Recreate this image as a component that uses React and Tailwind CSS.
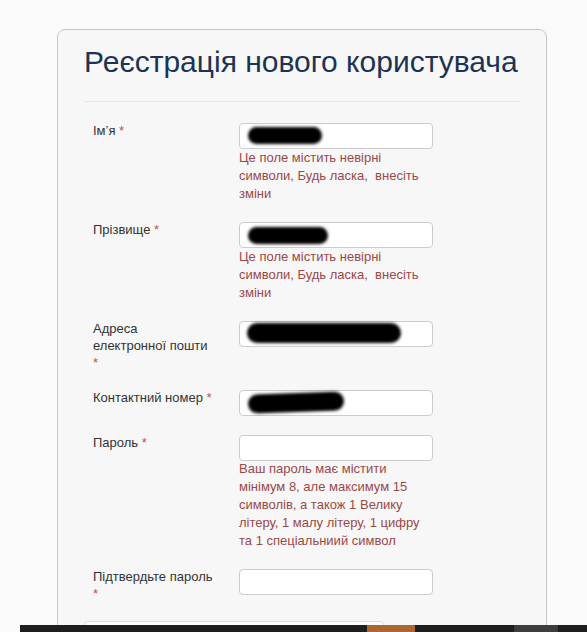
import React from "react";

const font = { fontFamily: '"Liberation Sans", Arial, sans-serif' };

function Star() {
  return <span className="text-[#c0504d]"> *</span>;
}

function Blob({ className }) {
  return (
    <div className={"pointer-events-none absolute rounded-full bg-black blur-[1.5px] " + className} />
  );
}

function Field({ children }) {
  return (
    <div className="relative h-[26px] w-[194px] rounded-[4px] border border-[#cccccc] bg-white">
      {children}
    </div>
  );
}

function Row({ label, children, className = "" }) {
  return (
    <div className={"flex " + className}>
      <div className="-mt-[1px] w-[146px] pr-3 text-[13px] leading-[17px] text-[#333333]">{label}</div>
      <div className="flex flex-col">{children}</div>
    </div>
  );
}

function Err({ children }) {
  return <div className="w-[194px] text-[13px] leading-[18px] text-[#9a4848]">{children}</div>;
}

export default function App() {
  return (
    <div className="relative h-[632px] w-[587px] overflow-hidden bg-[#fafafa]" style={font}>
      <div className="ml-[57px] mt-[29px] w-[490px] rounded-[8px] border border-[#c8c8c8] bg-[#f7f7f7] px-[26px] pb-10">
        <h1 className="pt-[12px] text-[30px] leading-[40px] text-[#1c3353]">Реєстрація нового користувача</h1>
        <div className="mt-[19px] h-px bg-[#e8e8e8]" />
        <div className="ml-[9px] mt-[21px] flex flex-col gap-[19px]">
          <Row label={<>Ім’я<Star /></>}>
            <Field>
              <Blob className="left-[8px] top-[3px] h-[17px] w-[74px]" />
            </Field>
            <Err>
              Це поле містить невірні символи, Будь ласка,&nbsp; внесіть зміни
            </Err>
          </Row>
          <Row label={<>Прізвище<Star /></>}>
            <Field>
              <Blob className="left-[8px] top-[4px] h-[17px] w-[80px]" />
            </Field>
            <Err>
              Це поле містить невірні символи, Будь ласка,&nbsp; внесіть зміни
            </Err>
          </Row>
          <Row label={<>Адреса<br />електронної пошти<br /><span className="text-[#c0504d]">*</span></>}>
            <Field>
              <Blob className="left-[7px] top-[1px] h-[20px] w-[154px]" />
            </Field>
          </Row>
          <Row label={<>Контактний номер<Star /></>}>
            <Field>
              <Blob className="left-[8px] top-[2px] h-[19px] w-[96px] -rotate-2" />
            </Field>
          </Row>
          <Row label={<>Пароль<Star /></>}>
            <Field />
            <div className="-mt-[1px]">
              <Err>
                Ваш пароль має містити мінімум 8, але максимум 15 символів, а також 1 Велику літеру, 1 малу літеру, 1 цифру та 1 спеціальниий символ
              </Err>
            </div>
          </Row>
          <Row label={<>Підтвердьте пароль<br /><span className="text-[#c0504d]">*</span></>}>
            <Field />
          </Row>
          <div className="-ml-[9px] h-[40px] w-[300px] rounded-[4px] border border-[#dddddd] bg-white" />
        </div>
      </div>
      <div className="absolute bottom-0 left-[20px] right-0 flex h-[7px] bg-[#1e1e1e]">
        <div className="w-[347px]" />
        <div className="w-[48px] bg-[#a8682f]" />
        <div className="w-[99px]" />
        <div className="w-[44px] bg-[#3d3d3d]" />
      </div>
    </div>
  );
}
